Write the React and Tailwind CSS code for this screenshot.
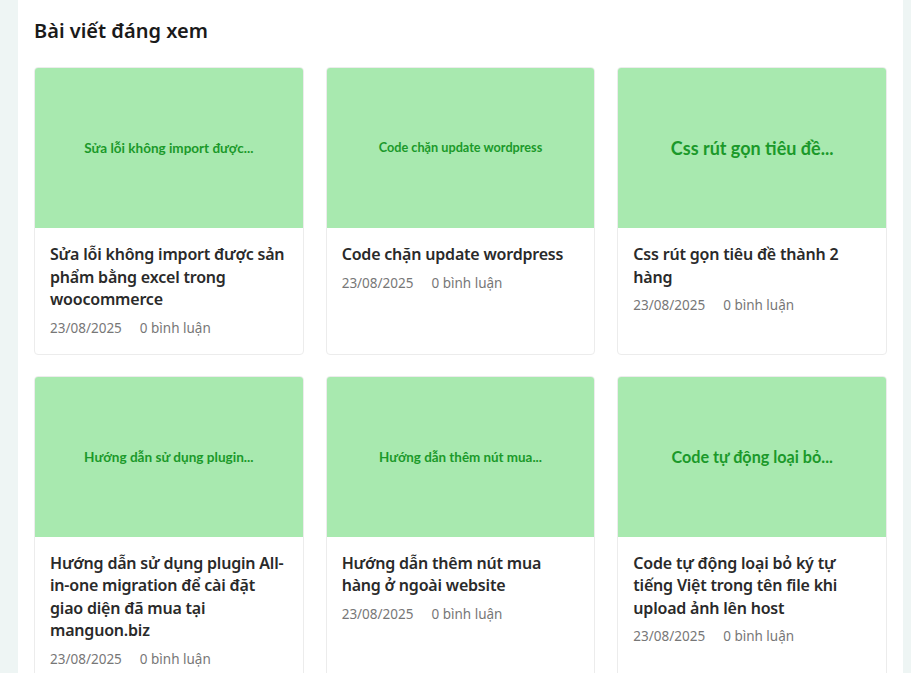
const posts = [
  { thumb: "Sửa lỗi không import được...", size: "text-[13.5px]", title: "Sửa lỗi không import được sản phẩm bằng excel trong woocommerce" },
  { thumb: "Code chặn update wordpress", size: "text-[12.7px]", title: "Code chặn update wordpress" },
  { thumb: "Css rút gọn tiêu đề...", size: "text-[18px]", title: "Css rút gọn tiêu đề thành 2 hàng" },
  { thumb: "Hướng dẫn sử dụng plugin...", size: "text-[13.6px]", title: "Hướng dẫn sử dụng plugin All-in-one migration để cài đặt giao diện đã mua tại manguon.biz" },
  { thumb: "Hướng dẫn thêm nút mua...", size: "text-[13.4px]", title: "Hướng dẫn thêm nút mua hàng ở ngoài website" },
  { thumb: "Code tự động loại bỏ...", size: "text-[16.2px]", title: "Code tự động loại bỏ ký tự tiếng Việt trong tên file khi upload ảnh lên host" },
]

function PostCard({ post: { thumb, size, title } }) {
  return (
    <div className="bg-white border border-[#ececec] rounded-[4px] overflow-hidden flex flex-col">
      <div className="h-[160px] bg-[#a8e9af] flex items-center justify-center px-3">
        <span className={`${size} font-bold text-[#1b992a] font-['Lato',sans-serif]`}>{thumb}</span>
      </div>
      <div className="px-[15px] pt-[15px] pb-[16px]">
        <h3 className="text-[16px] leading-[22.5px] tracking-[-0.2px] font-semibold text-[#2a2a2a]">{title}</h3>
        <div className="mt-[7px] flex gap-[18px] text-[13.5px] text-[#777]">
          <span>23/08/2025</span>
          <span>0 bình luận</span>
        </div>
      </div>
    </div>
  )
}

export default function App() {
  return (
    <div className="min-h-screen bg-[#eef5f4] pl-[18px] pr-[8px] font-['Noto_Sans',sans-serif]">
      <div className="bg-white min-h-screen px-4 pt-[16px] pb-8">
        <h2 className="text-[20px] leading-[30px] font-semibold text-[#1a1a1a]">Bài viết đáng xem</h2>
        <div className="mt-[21px] grid grid-cols-3 gap-x-[22px] gap-y-[21px]">
          {posts.map((p, i) => <PostCard key={i} post={p} />)}
        </div>
      </div>
    </div>
  )
}
